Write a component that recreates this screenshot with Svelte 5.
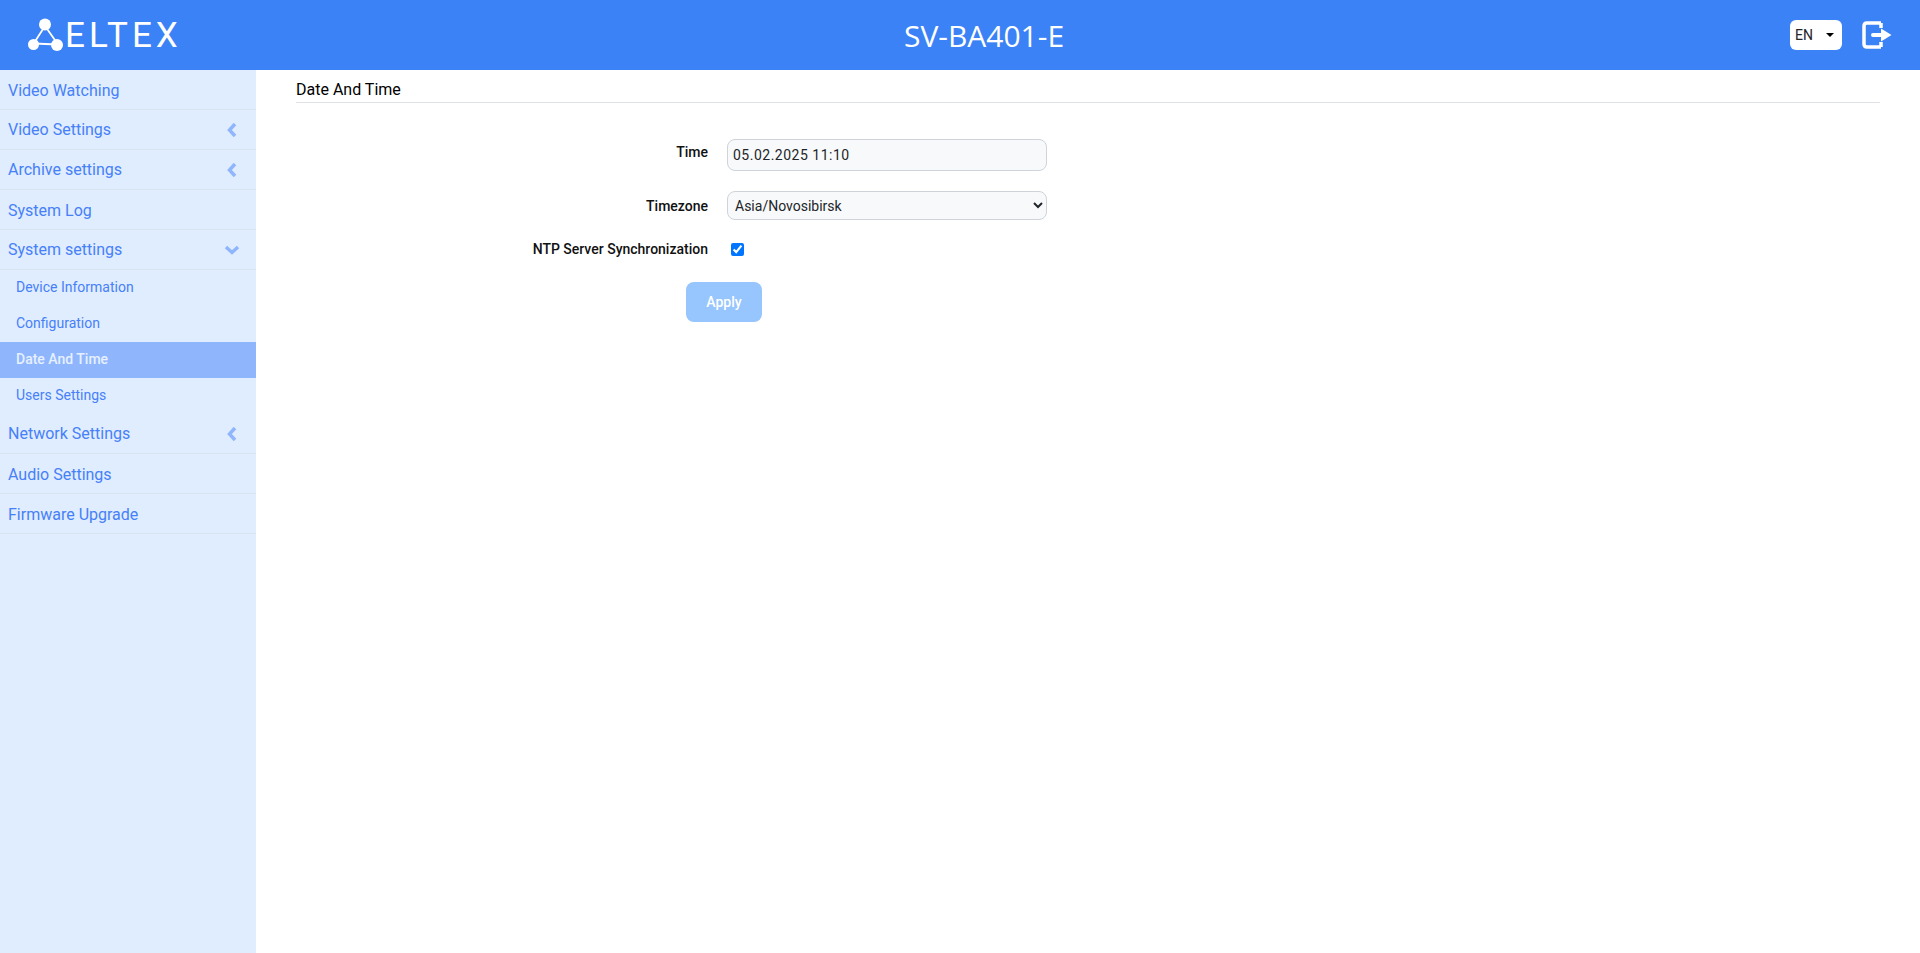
<script>
	const topMenu = [
		{ name: 'Video Watching' },
		{ name: 'Video Settings', arrow: 'left' },
		{ name: 'Archive settings', arrow: 'left' },
		{ name: 'System Log' },
		{
			name: 'System settings',
			arrow: 'down',
			children: ['Device Information', 'Configuration', 'Date And Time', 'Users Settings']
		},
		{ name: 'Network Settings', arrow: 'left' },
		{ name: 'Audio Settings' },
		{ name: 'Firmware Upgrade' }
	];

	let time = $state('05.02.2025 11:10');
	let timezone = $state('Asia/Novosibirsk');
	let ntp = $state(true);
	const current = 'Date And Time';
</script>

<header class="header">
	<div class="logo">
		<svg width="36" height="34" viewBox="0 0 36 34">
			<path d="M17 8 L6 25 M17 8 L29 25 M6 25.500 L29 26.500" fill="none" stroke="#fff" stroke-width="1.800" />
			<circle cx="17" cy="6.500" r="6" fill="#fff" />
			<circle cx="5.500" cy="26.500" r="5.500" fill="#fff" />
			<circle cx="29" cy="27" r="6" fill="#fff" />
		</svg>
		<span class="logo-text">ELTEX</span>
	</div>
	<div class="device">SV-BA401-E</div>
	<div class="tools">
		<button class="lang">EN<span class="caret"></span></button>
		<svg class="logout" width="30" height="28" viewBox="0 0 30 28">
			<path d="M19 2 H5 Q2 2 2 5 V23 Q2 26 5 26 H19 M19 2 V7 M19 21 V26" fill="none" stroke="#fff" stroke-width="3.500" />
			<path d="M11 12 H19 V7.500 L29.500 14 L19 20.500 V16 H11 Q9 16 9 14 Q9 12 11 12 Z" fill="#fff" />
		</svg>
	</div>
</header>

<div class="layout">
	<nav class="sidebar">
		{#each topMenu as item}
			<div class="item" class:plain={!item.arrow}>
				<span>{item.name}</span>
				{#if item.arrow === 'left'}
					<svg class="left" width="12" height="16" viewBox="0 0 12 16"><path d="M9 2 L3.500 8 L9 14" fill="none" stroke="#8fb6fd" stroke-width="3.400" /></svg>
				{:else if item.arrow === 'down'}
					<svg width="16" height="12" viewBox="0 0 16 12"><path d="M2 3 L8 8.500 L14 3" fill="none" stroke="#8fb6fd" stroke-width="3.400" /></svg>
				{/if}
			</div>
			{#if item.children}
				{#each item.children as child}
					<div class="subitem" class:active={child === current}>{child}</div>
				{/each}
			{/if}
		{/each}
	</nav>

	<main class="content">
		<h1 class="title">Date And Time</h1>
		<form class="form" onsubmit={e => e.preventDefault()}>
			<label class="label time-label" for="time">Time</label>
			<input id="time" class="control time" bind:value={time} />

			<label class="label" for="tz">Timezone</label>
			<select id="tz" class="control zone" bind:value={timezone}>
				<option>Asia/Novosibirsk</option>
				<option>Asia/Omsk</option>
				<option>Europe/Moscow</option>
			</select>

			<label class="label" for="ntp">NTP Server Synchronization</label>
			<div class="check"><input id="ntp" type="checkbox" bind:checked={ntp} /></div>

			<button class="apply" type="submit">Apply</button>
		</form>
	</main>
</div>

<style>
	:global(body) {
		font-family: Roboto, "Liberation Sans", sans-serif;
		background: #fff;
	}

	.header {
		height: 70px;
		background: #3b82f6;
		display: grid;
		grid-template-columns: 1fr auto 1fr;
		align-items: center;
		padding: 0 28px;
	}

	.logo {
		display: flex;
		align-items: center;
		gap: 1px;
		color: #fff;
	}

	.logo-text {
		font-size: 35px;
		font-weight: 400;
		letter-spacing: 4px;
		line-height: 1;
	}

	.device {
		color: #fff;
		font-family: "Open Sans", sans-serif;
		font-size: 30px;
		margin-left: 48px;
	}

	.tools {
		display: flex;
		justify-content: flex-end;
		align-items: center;
		gap: 20px;
	}

	.lang {
		width: 52px;
		height: 30px;
		background: #fff;
		border: none;
		border-radius: 6px;
		font: 14px Roboto, sans-serif;
		color: #212529;
		display: flex;
		align-items: center;
		justify-content: space-between;
		padding: 0 8px 0 5px;
	}

	.caret {
		border-top: 4px solid #000;
		border-left: 4px solid transparent;
		border-right: 4px solid transparent;
	}

	.layout {
		display: flex;
		min-height: 883px;
	}

	.sidebar {
		width: 256px;
		flex: none;
		background: #e0edff;
		color: #4680f8;
	}

	.item {
		height: 40px;
		box-sizing: border-box;
		border-bottom: 1px solid #d9e2ef;
		display: flex;
		align-items: center;
		justify-content: space-between;
		padding: 0 16px 0 8px;
		font-size: 16px;
	}

	.item.plain {
		padding-top: 2px;
	}

	.item .left {
		margin-right: 2px;
	}

	.subitem {
		height: 36px;
		box-sizing: border-box;
		display: flex;
		align-items: center;
		padding: 0 0 2px 16px;
		font-size: 14px;
	}

	.subitem.active {
		background: #8fb6fd;
		color: #e6f0ff;
		font-weight: 500;
	}

	.content {
		flex: 1;
		padding: 0 40px;
	}

	.title {
		margin: 0;
		height: 33px;
		box-sizing: border-box;
		border-bottom: 1px solid #dee2e6;
		font-size: 16px;
		font-weight: 400;
		line-height: 39px;
		color: #000;
	}

	.form {
		display: grid;
		grid-template-columns: 412px 320px;
		column-gap: 19px;
		align-items: center;
		margin-top: 36px;
	}

	.label {
		text-align: right;
		font-size: 14px;
		font-weight: 500;
		color: #111;
		margin-bottom: 20px;
	}

	.time-label {
		margin-bottom: 26px;
	}

	.control {
		box-sizing: border-box;
		width: 320px;
		border: 1px solid #ced4da;
		border-radius: 8px;
		background-color: #f8f9fa;
		color: #212529;
		font: 14px Roboto, sans-serif;
	}

	.time {
		height: 32px;
		padding: 0 5px 1px;
		letter-spacing: 0.5px;
		margin-bottom: 20px;
	}

	.zone {
		height: 29px;
		padding: 0 3px;
		margin-bottom: 21px;
	}

	.check {
		display: flex;
		margin-bottom: 20px;
		padding-left: 4px;
	}

	.check input {
		margin: 0;
		width: 13px;
		height: 13px;
	}

	.apply {
		grid-column: 1 / 3;
		justify-self: start;
		margin-left: 390px;
		margin-top: 5px;
		width: 76px;
		height: 40px;
		padding: 0 0 1px;
		border: none;
		border-radius: 8px;
		background: #97c5fd;
		color: #fff;
		font: 500 14px Roboto, sans-serif;
	}
</style>
